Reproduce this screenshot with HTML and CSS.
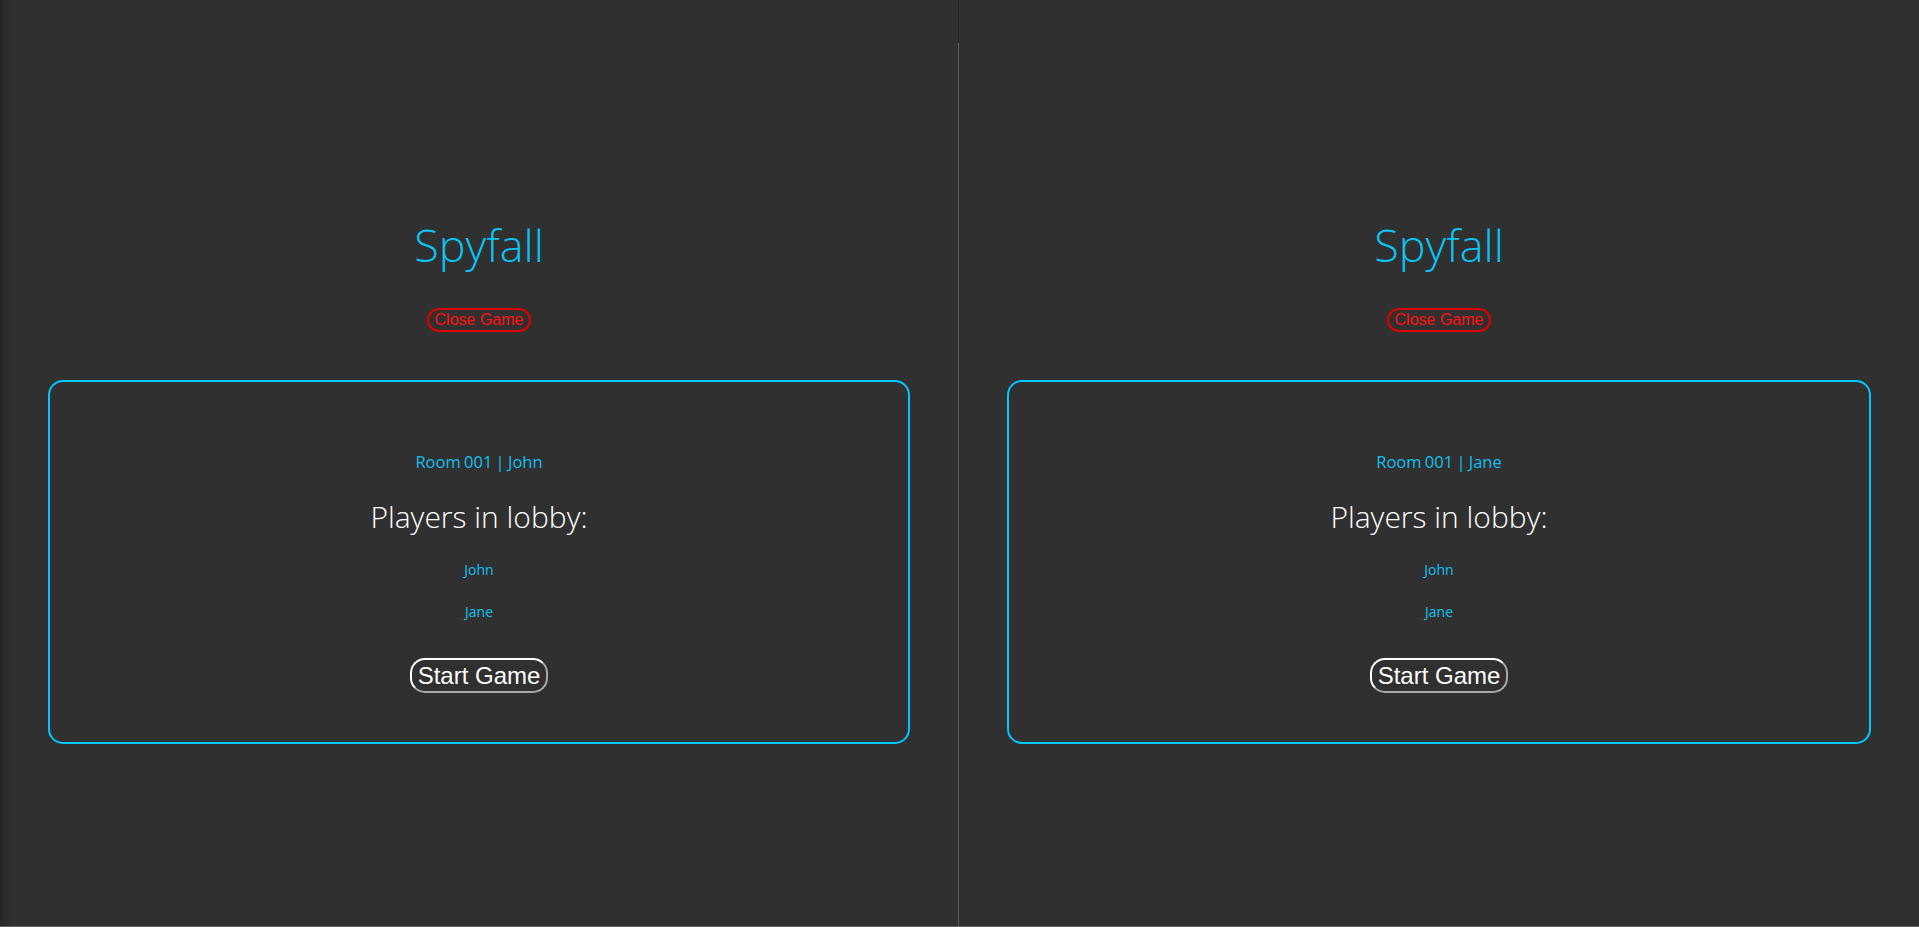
FILE: index.html
```html
<!DOCTYPE html>
<html>
<head>
<meta charset="utf-8">
<title>Spyfall</title>
<link rel="stylesheet" href="styles.css">
</head>
<body>
<div class="screen">
  <div class="windows">
    <section class="window window-left">
      <h1 class="title">Spyfall</h1>
      <button class="close-btn">Close Game</button>
      <div class="lobby">
        <div class="room">Room 001 | John</div>
        <h2 class="players-heading">Players in lobby:</h2>
        <div class="player">John</div>
        <div class="player">Jane</div>
        <button class="start-btn">Start Game</button>
      </div>
    </section>
    <div class="divider"><span class="divider-top"></span></div>
    <section class="window window-right">
      <h1 class="title">Spyfall</h1>
      <button class="close-btn">Close Game</button>
      <div class="lobby">
        <div class="room">Room 001 | Jane</div>
        <h2 class="players-heading">Players in lobby:</h2>
        <div class="player">John</div>
        <div class="player">Jane</div>
        <button class="start-btn">Start Game</button>
      </div>
    </section>
  </div>
  <div class="bottom-line"></div>
</div>
</body>
</html>
```
FILE: styles.css
```css
* { box-sizing: border-box; }
html, body {
  margin: 0;
  padding: 0;
  background: #303030;
  overflow: hidden;
}
.screen {
  width: 1919px;
  height: 927px;
  display: flex;
  flex-direction: column;
}
.windows {
  display: flex;
  height: 926px;
}
.bottom-line {
  height: 1px;
  background: #626262;
}
.window {
  display: flex;
  flex-direction: column;
  align-items: center;
  padding-top: 215px;
  background: #303030;
  font-family: "Open Sans", "Segoe UI", sans-serif;
}
.window-left {
  width: 958px;
  background: linear-gradient(to right, #242424 0px, #2b2b2b 5px, #303030 12px);
}
.window-right {
  width: 960px;
}
.divider {
  width: 1px;
  background: #5c5c5c;
  position: relative;
}
.divider-top {
  position: absolute;
  left: 0;
  top: 0;
  width: 1px;
  height: 43px;
  background: #262626;
}
.title {
  margin: 0;
  font-size: 45px;
  font-weight: 300;
  line-height: 60px;
  color: #0cc4f2;
}
.close-btn {
  margin-top: 33px;
  font-family: "Liberation Sans", Arial, sans-serif;
  font-size: 16px;
  line-height: 18px;
  color: #ff1010;
  background: transparent;
  border: 2px solid #e00000;
  border-radius: 12px;
  padding: 1px 6px;
  height: 24px;
}
.lobby {
  margin-top: 48px;
  width: 90%;
  height: 364px;
  border: 2px solid #00c8ff;
  border-radius: 15px;
  padding-top: 68px;
  display: flex;
  flex-direction: column;
  align-items: center;
}
.room {
  font-size: 16.5px;
  line-height: 24px;
  color: #10c0f0;
  word-spacing: -1px;
}
.players-heading {
  margin: 23px 0 0;
  font-size: 30px;
  font-weight: 300;
  line-height: 40px;
  color: #ffffff;
}
.player {
  margin-top: 22px;
  font-size: 14px;
  line-height: 22px;
  color: #10c0f0;
}
.player + .player {
  margin-top: 20px;
}
.start-btn {
  margin-top: 35px;
  height: 35px;
  font-family: "Liberation Sans", Arial, sans-serif;
  font-size: 24px;
  line-height: 27px;
  color: #ffffff;
  background: transparent;
  border: 2px solid;
  border-color: #ffffff #a8a8a8 #a8a8a8 #ffffff;
  border-radius: 15px;
  padding: 1px 6px;
}
```
